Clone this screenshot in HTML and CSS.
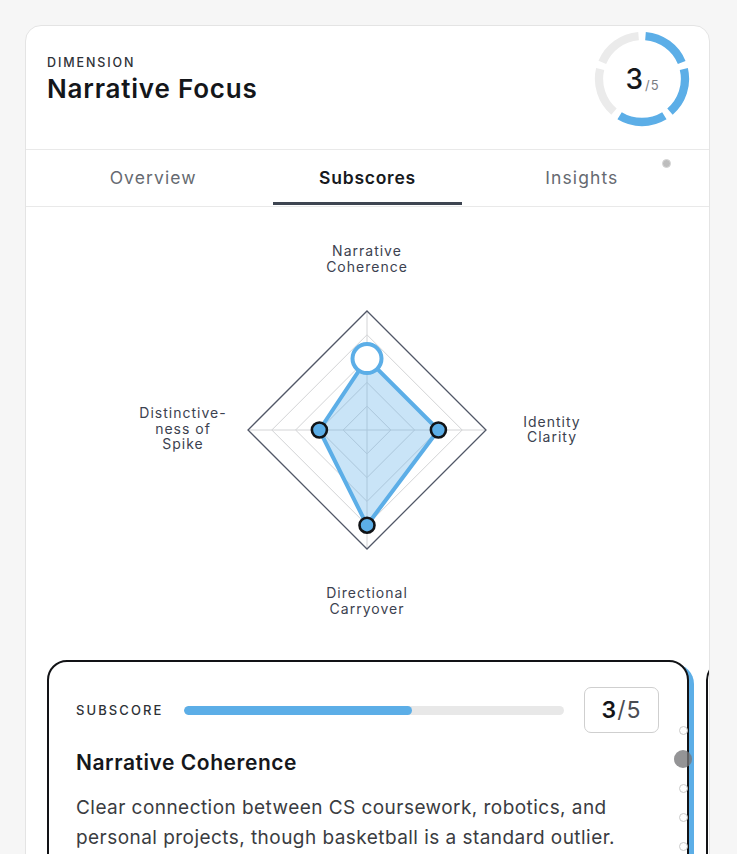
FILE: index.html
```html
<!DOCTYPE html>
<html lang="en">
<head>
<meta charset="utf-8">
<title>Narrative Focus</title>
<link rel="stylesheet" href="styles.css">
</head>
<body>
<div class="card">
  <header class="head">
    <div class="titles">
      <div class="eyebrow">DIMENSION</div>
      <h1 class="title">Narrative Focus</h1>
    </div>
    <div class="ring">
      <svg class="ring-svg" width="96" height="96" viewBox="0 0 96 96">
        <circle class="seg on" cx="48" cy="48" r="43" transform="rotate(-85.35 48 48)"/>
        <circle class="seg on" cx="48" cy="48" r="43" transform="rotate(-13.35 48 48)"/>
        <circle class="seg on" cx="48" cy="48" r="43" transform="rotate(58.65 48 48)"/>
        <circle class="seg off" cx="48" cy="48" r="43" transform="rotate(130.65 48 48)"/>
        <circle class="seg off" cx="48" cy="48" r="43" transform="rotate(202.65 48 48)"/>
      </svg>
      <div class="ring-score"><span class="big">3</span><span class="of">/5</span></div>
    </div>
  </header>

  <nav class="tabs">
    <div class="tab">Overview</div>
    <div class="tab active">Subscores</div>
    <div class="tab">Insights</div>
    <span class="tab-dot"></span>
  </nav>

  <svg class="radar" width="683" height="453" viewBox="26 208 683 453">
    <g class="grid">
      <polygon points="367,407.2 390.8,431 367,454.8 343.2,431"/>
      <polygon points="367,383.4 414.6,431 367,478.6 319.4,431"/>
      <polygon points="367,359.6 438.4,431 367,502.4 295.6,431"/>
      <polygon points="367,335.8 462.2,431 367,526.2 271.8,431"/>
      <line x1="367" y1="312" x2="367" y2="550"/>
      <line x1="248" y1="431" x2="486" y2="431"/>
    </g>
    <polygon class="outer" points="367,312 486,431 367,550 248,431"/>
    <polygon class="area" points="367,359.6 438.4,431 367,526.2 319.4,431"/>
    <circle class="pt" cx="438.4" cy="431" r="7.5"/>
    <circle class="pt" cx="367" cy="526.2" r="7.5"/>
    <circle class="pt" cx="319.4" cy="431" r="7.5"/>
    <circle class="pt-active" cx="367" cy="359.6" r="14.5"/>
    <g class="lbl">
      <text x="367" y="256.5">Narrative</text>
      <text x="367" y="272.5">Coherence</text>
      <text x="552" y="427.5">Identity</text>
      <text x="552" y="443">Clarity</text>
      <text x="183" y="419">Distinctive-</text>
      <text x="183" y="434.5">ness of</text>
      <text x="183" y="450">Spike</text>
      <text x="367" y="599">Directional</text>
      <text x="367" y="614.5">Carryover</text>
    </g>
  </svg>

  <div class="carousel">
    <article class="sub selected">
      <div class="sub-row">
        <span class="sub-label">SUBSCORE</span>
        <div class="bar"><div class="bar-fill" style="width:60%"></div></div>
        <div class="score-box"><span class="num">3</span><span class="den">/5</span></div>
      </div>
      <h2 class="sub-title">Narrative Coherence</h2>
      <p class="sub-desc">Clear connection between CS coursework, robotics, and personal projects, though basketball is a standard outlier.</p>
    </article>
    <article class="sub"></article>
    <div class="dots">
      <span class="slot"><span class="dot"></span></span>
      <span class="slot"><span class="dot big"></span></span>
      <span class="slot"><span class="dot"></span></span>
      <span class="slot"><span class="dot"></span></span>
      <span class="slot"><span class="dot"></span></span>
    </div>
  </div>
</div>
</body>
</html>
```

FILE: styles.css
```css
* { box-sizing: border-box; }

html, body {
  margin: 0;
  height: 100%;
}

body {
  background: #f6f6f6;
  padding: 25px 27px 0 25px;
  font-family: "Inter", "Noto Sans", "Liberation Sans", sans-serif;
  color: #16181d;
  overflow: hidden;
}

.card {
  width: 685px;
  min-height: 900px;
  background: #ffffff;
  border: 1px solid #e4e4e4;
  border-radius: 16px;
  overflow: hidden;
}

/* header */
.head {
  display: flex;
  justify-content: space-between;
  align-items: flex-start;
  height: 124px;
  padding: 5px 19px 0 21px;
  border-bottom: 1px solid #e9e9e9;
}

.titles {
  padding-top: 24px;
}

.eyebrow {
  font-size: 12.5px;
  line-height: 16px;
  letter-spacing: 1.9px;
  font-weight: 500;
  color: #2f3237;
}

.title {
  margin: 3px 0 0;
  font-size: 26px;
  line-height: 30px;
  font-weight: 600;
  color: #14161a;
  letter-spacing: 0.8px;
}

.ring {
  display: grid;
  width: 96px;
  height: 96px;
}

.ring-svg, .ring-score {
  grid-area: 1 / 1;
}

.seg {
  fill: none;
  stroke-width: 8.3;
  stroke-dasharray: 47 223.2;
}
.seg.on { stroke: #5caee7; }
.seg.off { stroke: #ebebeb; }

.ring-score {
  display: flex;
  align-items: center;
  justify-content: center;
  padding-left: 1px;
}

.ring-score .big {
  font-size: 28px;
  font-weight: 500;
  color: #15171b;
  line-height: 1;
}

.ring-score .of {
  font-size: 13px;
  color: #7a7d82;
  margin-left: 2px;
  letter-spacing: 1px;
  position: relative;
  top: 6px;
}

/* tabs */
.tabs {
  position: relative;
  display: grid;
  grid-template-columns: repeat(3, 1fr);
  padding: 0 20px;
  border-bottom: 1px solid #e9e9e9;
}

.tab {
  height: 55px;
  margin: 0 13px 1px;
  padding-top: 3px;
  border-bottom: 3px solid transparent;
  display: flex;
  align-items: center;
  justify-content: center;
  font-size: 17.5px;
  letter-spacing: 1.1px;
  color: #666a71;
}

.tab.active {
  color: #17191d;
  font-weight: 600;
  letter-spacing: 0.75px;
  border-bottom-color: #3e4551;
}

.tab-dot {
  position: absolute;
  left: 636px;
  top: 9px;
  width: 9px;
  height: 9px;
  border-radius: 50%;
  background: #bdbdbd;
  border: 1px solid #d6d6d6;
}

/* radar */
.radar {
  display: block;
}

.grid polygon, .grid line {
  fill: none;
  stroke: #d3d4d6;
  stroke-width: 1;
}

.outer {
  fill: none;
  stroke: #515767;
  stroke-width: 1.3;
}

.area {
  fill: rgba(92, 174, 231, 0.33);
  stroke: #5caee7;
  stroke-width: 4;
  stroke-linejoin: round;
}

.pt {
  fill: #5caee7;
  stroke: #111316;
  stroke-width: 2.6;
}

.pt-active {
  fill: #ffffff;
  stroke: #5caee7;
  stroke-width: 4;
}

.lbl text {
  font-family: "Inter", "Noto Sans", "Liberation Sans", sans-serif;
  font-size: 14px;
  letter-spacing: 1px;
  fill: #3c4250;
  text-anchor: middle;
}

/* subscore carousel */
.carousel {
  position: relative;
  display: flex;
  gap: 17px;
  padding-left: 21px;
}

.sub {
  flex-shrink: 0;
  width: 642px;
  min-height: 260px;
  border: 2.5px solid #121316;
  border-radius: 20px;
  background: #ffffff;
  padding: 25px 28px 0 27px;
}

.sub.selected {
  box-shadow: 5px 4px 0 #5caee7;
}

.sub-row {
  display: flex;
  align-items: center;
  gap: 20px;
}

.sub-label {
  font-size: 13px;
  font-weight: 500;
  letter-spacing: 2.1px;
  color: #2e3136;
}

.bar {
  flex: 1;
  height: 9px;
  border-radius: 5px;
  background: #e8e8e8;
  overflow: hidden;
}

.bar-fill {
  height: 100%;
  background: #5caee7;
  border-radius: 5px;
}

.score-box {
  width: 75px;
  height: 46px;
  border: 1px solid #cfcfcf;
  border-radius: 7px;
  display: flex;
  align-items: center;
  justify-content: center;
  font-size: 23px;
}

.score-box .num {
  font-weight: 600;
  color: #131418;
}

.score-box .den {
  font-weight: 400;
  color: #4a4d53;
  margin-left: 1px;
  letter-spacing: 1px;
}

.sub-title {
  margin: 17px 0 0;
  font-size: 21px;
  line-height: 26px;
  font-weight: 600;
  color: #15171b;
  letter-spacing: 0.55px;
}

.sub-desc {
  margin: 17px 0 0;
  font-size: 19px;
  line-height: 30px;
  color: #3a3c41;
  letter-spacing: 0.45px;
}

.dots {
  position: absolute;
  left: 648px;
  top: 55.5px;
  width: 18px;
  display: flex;
  flex-direction: column;
}

.slot {
  height: 29px;
  display: flex;
  align-items: center;
  justify-content: center;
}

.dot {
  width: 9px;
  height: 9px;
  border-radius: 50%;
  border: 1px solid #cacaca;
  background: rgba(255, 255, 255, 0.5);
}

.dot.big {
  width: 18px;
  height: 18px;
  border: none;
  background: rgba(118, 118, 120, 0.78);
}
```
